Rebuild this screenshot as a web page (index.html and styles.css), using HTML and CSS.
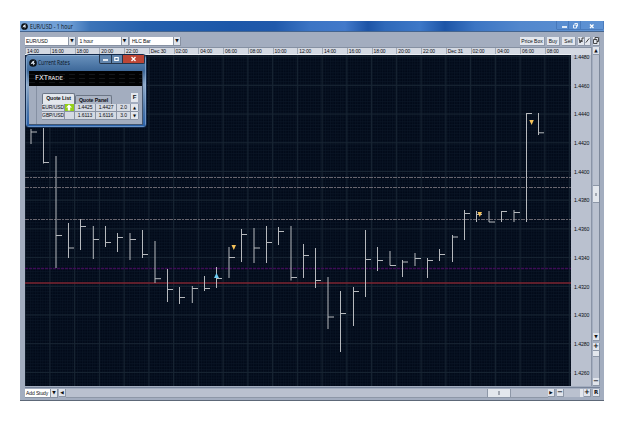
FILE: index.html
```
<!DOCTYPE html>
<html lang="en">
<head>
  <meta charset="UTF-8">
  <title>EUR/USD - 1 hour</title>
  <link rel="stylesheet" href="styles.css">
</head>
<body>
  <div class="window">
    <div class="titlebar">
      <svg class="logo" viewBox="0 0 10 10"><circle cx="5" cy="5" r="4.8" fill="#0b1118"/><path d="M2 6.5L4 3l3-1-1 2.5 1.5 1L5 8l.3-2.5z" fill="#dfe8f2"/></svg>
      <span class="title">EUR/USD - 1 hour</span>
      <div class="window-buttons">
        <svg viewBox="0 0 48 11"><path d="M.5 0v7.5q0 1 1 1h45q1 0 1-1V0M12.5 0v8M24.5 0v8" fill="none" stroke="#2c5a9c" opacity=".4"/><path d="M6 6h5" stroke="#fff" stroke-width="1.6"/><path d="M17.500 4h3v3h-3zM18.500 2.500h3v3" fill="none" stroke="#e8f0fa"/><path d="M34 3.500l3.500 3.500M37.500 3.500l-3.500 3.500" stroke="#fff" stroke-width="1.300"/></svg>
      </div>
    </div>

    <div class="toolbar">
      <div class="select pair">EUR/USD<i>▼</i></div>
      <div class="select period">1 hour<i>▼</i></div>
      <div class="select type">HLC Bar<i>▼</i></div>
      <div class="actions">
        <button class="price-box">Price Box</button>
        <button class="buy">Buy</button>
        <button class="sell">Sell</button>
        <button class="tool"><svg viewBox="0 0 6 7"><path d="M1 1l1 5 1-3 1 2V1h2" fill="none" stroke="#222" stroke-width=".8"/></svg></button>
        <button class="tool line"><svg viewBox="0 0 6 7"><path d="M1 6l4-5" stroke="#222"/></svg></button>
        <button class="tool"><svg viewBox="0 0 6 7"><path d="M.5 2.500h3.500v4H.5zM2 2.500v-2h3.500v4H4" fill="none" stroke="#222" stroke-width=".8"/></svg></button>
      </div>
    </div>

    <div class="main">
      <div class="plot">
        <div class="times">
          <span>14:00</span><span>16:00</span><span>18:00</span><span>20:00</span><span>22:00</span><span>Dec 30</span><span>02:00</span><span>04:00</span><span>06:00</span><span>08:00</span><span>10:00</span><span>12:00</span><span>14:00</span><span>16:00</span><span>18:00</span><span>20:00</span><span>22:00</span><span>Dec 31</span><span>02:00</span><span>04:00</span><span>06:00</span><span>08:00</span>
        </div>
        <svg class="chart" viewBox="25 55 546 331">
          <defs>
            <pattern id="minor" x="25" y="55" width="2.480" height="2.880" patternUnits="userSpaceOnUse"><path d="M0 .5h2.480M.5 0v2.880" stroke="#0a1727" stroke-width=".6"/></pattern>
            <pattern id="major" x="24.600" y="56.200" width="24.750" height="28.700" patternUnits="userSpaceOnUse"><path d="M0 .5h24.750M.5 0v28.700" stroke="#182533"/></pattern>
          </defs>
          <rect x="25" y="55" width="546" height="331" fill="#010918"/>
          <rect x="25" y="55" width="546" height="331" fill="url(#minor)"/>
          <rect x="25" y="55" width="546" height="331" fill="url(#major)"/>

          <!-- price levels -->
          <path class="level" d="M25 177.500h546M25 187.500h546M25 219.500h546"/>
          <path class="purple" d="M25 268.500h546"/>
          <path class="red" d="M25 283h546"/>

          <!-- high/low bars with the close tick on the right -->
          <path class="bars" d="M31 129V144M31 132h6M43.500 128V163.500M43 162.500h6M56 156V268M56 235.500h6M68.500 223V258M68 248h6M80.500 219V250M80 226.500h6M93.300 226V259M93 239.500h6M105.500 226V247M105 242.500h6M117.500 233V252M117 237.500h6M130 233V260M130 239.500h6M142.500 230V258M142 254.500h6"/>
          <path class="bars" d="M155 241V283M155 278.700h6M167.500 269V302M167 289.500h6M179.500 287V304M179 297.500h6M192.300 286V303M192 288.500h6M204.500 276V291M204 288.500h6M216.500 267V288M216 278.500h6M229 247V278M229 257.500h6M241.500 229V262M241 234.500h6M254 228V263M254 248h6M266.500 226V263M266 242.500h6M278.500 227V245M278 231.500h6"/>
          <path class="bars" d="M291 226V280.500M291 277.500h6M303.500 244V278M303 255.500h6M315.500 248V288M315 280.500h6M328 277V329M328 317h6M340.500 291V352M340 313.500h6M353.500 287V326M353 291.500h6M365.500 230V297M365 259.500h6M377.500 247V271M377 260.500h6M390 251V265.500M390 265.500h6M402.500 260V277M402 262h6M415 253V266M415 258.500h6M427.500 258V278M427 260.500h6"/>
          <path class="bars" d="M439.500 249V261M439 254.500h6M452.500 235V262M452 237h6M464.500 210V240M464 213.500h6M476.500 211V222M477 214.500h5M489 211V222M489 222h6M501.500 211V222M501 211.500h6M514 210V222M514 212.500h6M526.500 113V222M526 113.500h6M538.500 113V135M538 132.800h6"/>

          <path class="sell-mark" d="M231.500 245h4.500l-2.200 5zM477.500 212h4.500l-2.200 5zM529.300 120h4.500l-2.200 5z"/>
          <path class="buy-mark" d="M214 278l2.500-5 2.500 5z"/>
        </svg>
      </div>

      <div class="prices">
        <span>1.4480</span><span>1.4460</span><span>1.4440</span><span>1.4420</span><span>1.4400</span><span>1.4380</span><span>1.4360</span><span>1.4340</span><span>1.4320</span><span>1.4300</span><span>1.4280</span><span>1.4260</span>
      </div>

      <div class="vscroll">
        <b>▲</b>
        <div class="track"><div class="thumb"></div></div>
        <b>▼</b>
        <b class="zoom-in">+</b>
        <div class="zoom-track"><div class="zoom-thumb"></div></div>
        <b class="zoom-out">−</b>
      </div>
    </div>

    <div class="bottombar">
      <div class="select study">Add Study<i>▼</i></div>
      <b class="left">◀</b>
      <div class="htrack"><div class="hthumb"></div></div>
      <b>▶</b>
      <b class="minus">−</b>
      <div class="hzoom"><div></div></div>
      <b class="plus">+</b>
      <b class="reset">R</b>
    </div>

    <div class="rates">
      <div class="rates-title">
        <svg class="logo" viewBox="0 0 10 10"><circle cx="5" cy="5" r="4.800" fill="#0b1118"/><path d="M2 6.500L4 3l3-1-1 2.500 1.500 1L5 8l.3-2.500z" fill="#dfe8f2"/></svg>
        <span>Current Rates</span>
        <div class="rates-buttons">
          <svg viewBox="0 0 44 8"><path d="M3 5h5" stroke="#fff" stroke-width="1.600"/><path d="M14.800 2.500h3.400v3h-3.400z" fill="none" stroke="#fff" stroke-width="1.200"/><path d="M11.500 0v8M22.500 0v8" stroke="#26364c"/><path d="M31.500 2l4 4M35.500 2l-4 4" stroke="#fff" stroke-width="1.300"/></svg>
        </div>
      </div>
      <div class="rates-body">
        <div class="banner">FXT<small>RADE</small></div>
        <div class="quotes">
          <div class="tabs">
            <div class="tab active">Quote List</div>
            <div class="tab">Quote Panel</div>
            <div class="f-button">F</div>
          </div>
          <div class="quote"><span>EUR/USD</span><span class="up"><svg viewBox="0 0 8 7"><path d="M4 .5L7 3.500H5.200v3H2.800v-3H1z" fill="#fff"/></svg></span><span>1.4425</span><span>1.4427</span><span>2.0</span><span class="arrow">▲</span></div>
          <div class="quote"><span>GBP/USD</span><span></span><span>1.6113</span><span>1.6116</span><span>3.0</span><span class="arrow">▼</span></div>
        </div>
      </div>
    </div>
  </div>
</body>
</html>
```
FILE: styles.css
```
* {
  box-sizing: border-box;
}

body {
  margin: 0;
  padding: 21px 0 0 20px;
  background: #fff;
  font-family: "Liberation Sans", Arial, sans-serif;
  font-size: 5px;
  letter-spacing: -.1px;
  color: #0c0e12;
  overflow: hidden;
}

.window {
  position: relative;
  display: flex;
  flex-direction: column;
  width: 584px;
  height: 380px;
  padding: 0 4px 3px 5px;
  background: #a3adbf;
  border-bottom: 1px solid #5d6878;
}

.titlebar {
  display: flex;
  align-items: center;
  height: 11px;
  margin: 0 -4px 0 -5px;
  padding-left: 1px;
  background: linear-gradient(90deg, #7ba7da 0, #6c9cd4 50px, #3c74b8 70px, #2460ad 125px, #1c57a9 210px, #2059ab 255px, #3b74c4 290px, #4279ca 325px, #1d54a6 348px, #2f69b9 365px, #3d78c8 400px, #1d55a7 425px, #3c75c3 455px, #5287cd 500px, #5f93d4 584px);
  border-bottom: 1px solid #45658f;
}

.logo {
  width: 7px;
  height: 7px;
  flex: none;
}

.title {
  margin-left: 2px;
  font: 6.8px "Open Sans", sans-serif;
  letter-spacing: 0;
  color: #0a1420;
  transform: scaleX(.77);
  transform-origin: left;
  white-space: nowrap;
}

.window-buttons {
  width: 48px;
  height: 10px;
  margin-left: auto;
}

.window-buttons svg {
  display: block;
  width: 48px;
  height: 11px;
}

.toolbar {
  display: flex;
  flex: none;
  height: 15px;
  padding-top: 5px;
}

.select {
  display: flex;
  flex: none;
  align-items: center;
  justify-content: space-between;
  height: 9px;
  padding-left: 1px;
  background: #fff;
  border: 1px solid #8791a2;
  border-width: 0 1px 1px 0;
  line-height: 8px;
  white-space: nowrap;
}

.select i {
  width: 7px;
  height: 8px;
  background: #dfe4ec;
  border-left: 1px solid #8d97a7;
  font: 4.5px/8px "DejaVu Sans", sans-serif;
  text-align: center;
}

.pair {
  width: 51px;
}

.period,
.type {
  width: 51px;
  margin-left: 1.5px;
  padding-left: 2px;
}

.actions {
  display: flex;
  margin-left: auto;
}

button {
  height: 9px;
  padding: 0;
  border: 1px solid #8d97a8;
  border-width: 0 1px 1px 0;
  background: #e3e7ee;
  font: 5px/8px "Liberation Sans", Arial, sans-serif;
  color: #0c0e12;
}

.price-box {
  width: 25px;
}

.buy {
  width: 13px;
  margin-left: 2px;
}

.sell {
  width: 14px;
  margin-left: 2px;
}

.tool {
  display: flex;
  width: 7px;
  margin-left: 2px;
}

.tool.line {
  width: 6px;
  margin-left: 0;
}

.tool svg {
  width: 6px;
  height: 7px;
}

.main {
  display: flex;
  flex: none;
  height: 339px;
}

.plot {
  flex: none;
  width: 546px;
}

.times {
  display: flex;
  height: 8px;
  background: #d4d9e2;
  border-top: 1px solid #8590a2;
  border-bottom: 1px solid #eceff4;
}

.times span {
  flex: 0 0 24.75px;
  height: 6px;
  padding-left: 1px;
  border-left: 1px solid #a0a9b7;
  line-height: 7px;
  white-space: nowrap;
}

.chart {
  display: block;
  width: 546px;
  height: 331px;
}

.level {
  stroke: #69666f;
  stroke-dasharray: 4 1 2 1;
}

.purple {
  stroke: #3d0d55;
  stroke-width: 1.3;
  stroke-dasharray: 3 1;
}

.red {
  stroke: #7d2430;
  stroke-width: 1.5;
}

.bars {
  fill: none;
  stroke: #b6b9bd;
}

.sell-mark {
  fill: #f4c25b;
}

.buy-mark {
  fill: #6ccdf3;
}

.prices {
  flex: none;
  width: 21px;
  height: 339px;
  padding-top: 6px;
  background: linear-gradient(#d4d9e2 7px, #bac1cf 7px);
  border-top: 1px solid #8590a2;
  border-right: 1px solid #8a94a6;
}

.prices span {
  display: block;
  height: 28.7px;
  padding-left: 3px;
  font-size: 5.2px;
  line-height: 7px;
}

.vscroll {
  display: flex;
  flex: none;
  flex-direction: column;
  width: 7px;
  margin-left: 1px;
}

b {
  display: block;
  flex: none;
  width: 7px;
  height: 8px;
  background: #e1e5ec;
  border: 1px solid #8d97a7;
  border-width: 0 1px 1px 0;
  font: bold 4.5px/7px "DejaVu Sans", sans-serif;
  letter-spacing: 0;
  text-align: center;
}

.track,
.zoom-track {
  flex: none;
  width: 7px;
  background: #bac1cf;
  border-right: 1px solid #7e899b;
}

.track {
  height: 278px;
  padding-top: 130px;
}

.thumb {
  height: 18px;
  padding: 7px 2px;
  background: #e3e7ed;
  border: 1px solid #8d97a7;
  border-width: 1px 0;
}

.thumb::before {
  content: "";
  display: block;
  height: 3px;
  background: #a1a7b1;
}

.zoom-in {
  margin-top: 2px;
}

.zoom-in,
.zoom-out,
.minus,
.plus {
  font-size: 7px;
}

.zoom-track {
  height: 27px;
}

.zoom-thumb {
  height: 6px;
  background: #e3e7ed;
  border-bottom: 1px solid #8d97a7;
}

.bottombar {
  display: flex;
  flex: none;
  height: 11px;
  margin-top: 1px;
  padding-top: 1px;
  border-top: 1px solid #77849a;
}

.study {
  width: 33px;
}

.left {
  margin-left: 1px;
}

.htrack {
  flex: none;
  width: 482px;
  height: 9px;
  padding-left: 421px;
  background: #bac1cf;
  border-bottom: 1px solid #8d97a7;
}

.hthumb {
  width: 24px;
  height: 8px;
  padding: 2px 10px;
  background: #e3e7ed;
  border: 1px solid #8d97a7;
  border-width: 0 1px;
}

.hthumb::before {
  content: "";
  display: block;
  height: 4px;
  background: #a1a7b1;
}

.minus {
  margin-left: 2px;
}

.hzoom {
  flex: none;
  width: 20px;
  height: 8px;
  padding-left: 16px;
  background: #bac1cf;
}

.hzoom div {
  width: 3px;
  height: 8px;
  background: #e3e7ed;
}

.reset {
  margin-left: 2px;
  font-size: 5.5px;
}

/* floating quotes window */
.rates {
  position: absolute;
  left: 5px;
  top: 33px;
  width: 122px;
  height: 74px;
  padding: 0 3px 3px;
  background: linear-gradient(#6a92bd, #3d6899 16px, #8ea9c8 30px, #4c76a9 55px, #2860aa);
  border: 1px solid #13294a;
  border-radius: 4px;
  box-shadow: 0 0 0 .5px #a9c5e2 inset;
}

.rates-title {
  display: flex;
  height: 16px;
  padding-top: 4px;
}

.rates-title .logo {
  width: 8px;
  height: 8px;
}

.rates-title span {
  margin-left: 1px;
  font: 6.6px/8px "Open Sans", sans-serif;
  letter-spacing: 0;
  color: #08111c;
  transform: scaleX(.75);
  transform-origin: left;
  white-space: nowrap;
}

.rates-buttons {
  width: 46px;
  height: 9px;
  margin: -4px -2px 0 auto;
  background: linear-gradient(90deg, #6285ad 23px, #bd4636 23px);
  border: 1px solid #26364c;
  border-top: 0;
  border-radius: 0 0 2px 2px;
}

.rates-buttons svg {
  display: block;
  width: 44px;
  height: 8px;
}

.rates-body {
  height: 54px;
  background: #a3adbf;
  border: 1px solid #44566e;
  border-width: 0 1px 1px 0;
}

.banner {
  height: 15px;
  padding-left: 6px;
  background: repeating-linear-gradient(90deg, transparent 0 6px, #020304 6px 10px), repeating-linear-gradient(#020304 0 3px, #14171a 3px 4px);
  color: #f4f4f4;
  font: 7px/15px "DejaVu Sans", sans-serif;
  letter-spacing: 0;
}

.banner small {
  font-size: 5.5px;
}

.quotes {
  height: 38px;
  margin-left: 7px;
  padding: 7px 4px 0 5px;
  border-left: 1px solid #8590a3;
}

.tabs {
  display: flex;
  align-items: flex-end;
  height: 11px;
}

.tab {
  width: 37px;
  height: 9px;
  background: #aab3c3;
  border: 1px solid #6c7686;
  border-bottom: 0;
  border-radius: 2px 2px 0 0;
  font: bold 5.2px/9px "Liberation Sans", Arial, sans-serif;
  text-align: center;
  white-space: nowrap;
}

.tab.active {
  width: 33px;
  height: 11px;
  background: #e3e7ed;
}

.f-button {
  width: 7px;
  height: 9px;
  margin: 0 0 2px auto;
  background: #e3e7ed;
  font: bold 6px/9px "Liberation Sans", Arial, sans-serif;
  text-align: center;
}

.quote {
  display: grid;
  grid-template-columns: 23px 10px 21px 21px 14px 8px;
  height: 8px;
  background: #d5dae3;
  border-bottom: 1px solid #8a94a5;
  line-height: 7px;
  text-align: center;
}

.quote span {
  border-right: 1px solid #8a94a5;
  font-size: 5px;
  overflow: hidden;
}

.quote .up {
  background: #93cf19;
}

.up svg {
  display: block;
  width: 8px;
  height: 7px;
}

.quote .arrow {
  background: #e3e7ed;
  font: 4px/7px "DejaVu Sans", sans-serif;
}
```
